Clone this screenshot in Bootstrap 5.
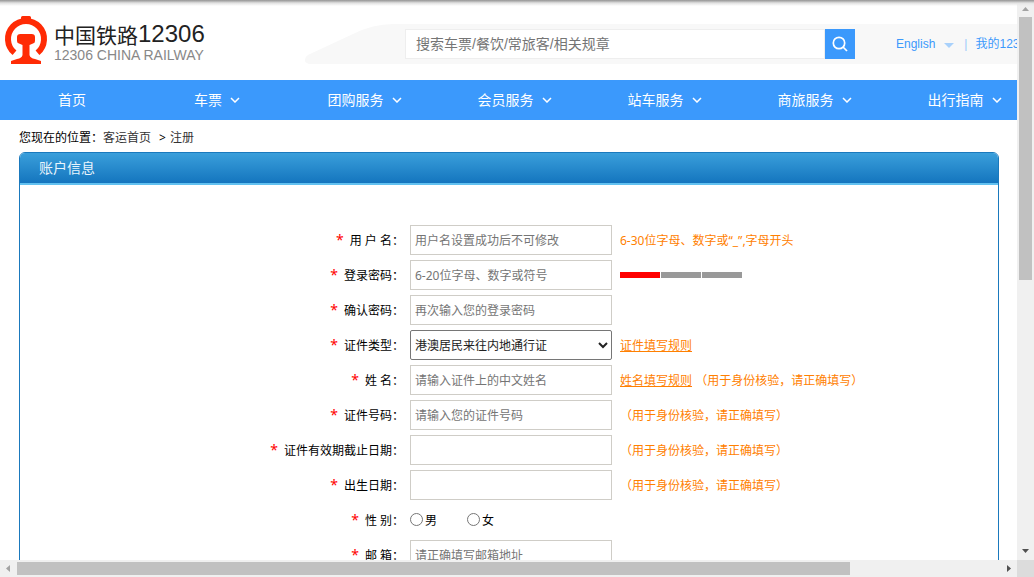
<!DOCTYPE html>
<html lang="zh-CN">
<head>
<meta charset="utf-8">
<meta name="viewport" content="width=device-width, initial-scale=1">
<title>中国铁路12306</title>
<link href="https://cdn.jsdelivr.net/npm/bootstrap@5.3.0/dist/css/bootstrap.min.css" rel="stylesheet">
<style>
body { font: 12px/18px "Noto Sans", "Noto Sans CJK SC", sans-serif; color: #000; background: #fff; }
.window { display: grid; grid-template-columns: minmax(0, 1fr) 17px; grid-template-rows: minmax(0, 1fr) 17px; height: 100vh; }
.top-shade { height: 6px; background: linear-gradient(#999 0, #a8a8a8 17%, #ccc 34%, #e8e8e8 60%, rgba(255,255,255,0)); pointer-events: none; }
/* header */
.site-head { height: 80px; }
.brand { width: 305px; padding-left: 4px; gap: 6px; color: #222; }
.brand-name { font: 24px/26px "Liberation Sans", sans-serif; }
.brand-name span { font: 400 21px/26px "Noto Sans CJK SC", sans-serif; }
.brand-sub { font: 14px/16px "Liberation Sans", sans-serif; color: #888; }
.tail { width: 100px; height: 40px; flex: none; }
.head-bar { height: 40px; background: #f8f8f8; }
.search { width: 450px; height: 30px; }
.search input { border: 1px solid #eee; padding: 0 10px; font: 14px/20px "Liberation Sans", "Noto Sans CJK SC", sans-serif; color: #333; background: #fff; outline: 0; }
.search input::placeholder { color: #757575; }
.search button { width: 30px; border: 0; background: #3b99fc; }
.head-links { font: 12px/18px "Liberation Sans", "Noto Sans CJK SC", sans-serif; padding-left: 41px; color: #3b99fc; }
.head-links a { color: #3b99fc; text-decoration: none; }
.drop { border: 5px solid transparent; border-top-color: #a9d1fb; border-bottom: 0; margin: 2px 10px 0 9px; }
/* navigation */
.main-nav { height: 40px; background: #3b99fc; font-size: 14px; }
.main-nav a { flex: 0 0 150px; color: #fff; text-decoration: none; gap: 8px; padding-right: 1px; }
.main-nav a.short { flex-basis: 145px; }
/* breadcrumb */
.crumbs { height: 32px; padding: 3px 19px 0; color: #000; }
.crumbs a, .crumbs .here { color: #333; text-decoration: none; }
/* account panel */
.panel { margin: 0 18px 0 19px; border: 1px solid #1a79bd; border-radius: 6px 6px 0 0; }
.panel h1 { height: 32px; margin: 0; padding-left: 19px; font-size: 14px; font-weight: 400; line-height: 30px; color: #e8f5fd; border-bottom: 2px solid #62c1f0; border-radius: 5px 5px 0 0; background: linear-gradient(#3a9fdb, #1475be); }
.panel form { padding: 40px 0; }
.line { height: 30px; margin-bottom: 5px; }
.caption { flex: 0 0 384px; text-align: right; margin-right: 6px; white-space: pre; }
.caption i { color: #f00; font-style: normal; font-size: 14px; margin-right: 6px; }
.field { width: 202px; height: 30px; flex: none; font-size: 12px; }
input.field { border: 1px solid #cfcdc7; padding: 0 4px; outline: 0; }
input.field::placeholder { color: #757575; }
select.field { border: 1px solid #767676; border-radius: 2px; background: #fff; color: #222; padding: 0; }
.hint { margin-left: 8px; padding-top: 2px; color: #ff8000; }
.hint a { color: #ff8000; }
.strength { gap: 1px; margin-left: 8px; }
.strength span { width: 40px; height: 6px; background: #999; }
.strength .on { background: #f00; }
.choice { width: 57px; gap: 2px; padding-top: 2px; }
.choice input { width: 13px; height: 13px; margin: 0 0 4px; }
/* scroll bars */
.sbar { background: #f0f0f0; }
.corner { background: #dcdcdc; }
.sbar svg { width: 17px; height: 17px; flex: none; }
.thumb { background: #c1c1c1; }
</style>
</head>
<body>
<div class="top-shade position-absolute top-0 start-0 w-100"></div>
<div class="window">
  <main class="overflow-hidden">
    <header class="site-head d-flex align-items-center">
      <div class="brand d-flex align-items-center flex-shrink-0">
        <svg width="44" height="50" viewBox="0 0 44 50" aria-hidden="true">
          <path d="M10.500 37.800A18 18 0 1 1 33.500 37.800" fill="none" stroke="#ff2b05" stroke-width="6"/>
          <path d="M17 2.500Q17 1 18.500 1H25.500Q27 1 27 2.500V7H17ZM16.500 19H27.500Q31 19 31 22V26Q31 28 29 28.500L25.500 30V40Q26 43 31 44L37 46V49H7V46L13 44Q18 43 18.500 40V30L15 28.500Q13 28 13 26V22Q13 19 16.500 19Z" fill="#ff2b05"/>
        </svg>
        <div class="pt-1">
          <div class="brand-name d-flex"><span>中国铁路</span>12306</div>
          <div class="brand-sub">12306 CHINA RAILWAY</div>
        </div>
      </div>
      <div class="d-flex flex-grow-1 pt-2 text-nowrap">
        <svg class="tail" viewBox="0 0 100 40" aria-hidden="true"><path d="M2 39Q0 39 0 36Q0 32 5 30L48 10Q68 0 88 0H100V40H4Z" fill="#f8f8f8"/></svg>
        <div class="head-bar d-flex align-items-center flex-grow-1">
          <form class="search d-flex flex-shrink-0" role="search">
            <input class="flex-grow-1" type="text" aria-label="搜索" placeholder="搜索车票/餐饮/常旅客/相关规章">
            <button type="button" class="d-flex align-items-center justify-content-center p-0" aria-label="搜索">
              <svg width="16" height="16" viewBox="0 0 16 16" fill="none" stroke="#fff" stroke-width="1.700"><circle cx="7" cy="7" r="5.700"/><path d="M11 11L15 15"/></svg>
            </button>
          </form>
          <div class="head-links d-flex align-items-center">
            <a href="#">English</a><span class="drop"></span><span class="me-2 opacity-50">|</span><a href="#">我的12306</a>
          </div>
        </div>
      </div>
    </header>
    <nav class="main-nav d-flex">
      <a href="#" class="short d-flex align-items-center justify-content-center">首页</a>
      <a href="#" class="short d-flex align-items-center justify-content-center">车票<svg width="10" height="6" viewBox="0 0 10 6" fill="none" stroke="#fff" stroke-width="1.500"><path d="M1 1L5 5L9 1"/></svg></a>
      <a href="#" class="d-flex align-items-center justify-content-center">团购服务<svg width="10" height="6" viewBox="0 0 10 6" fill="none" stroke="#fff" stroke-width="1.500"><path d="M1 1L5 5L9 1"/></svg></a>
      <a href="#" class="d-flex align-items-center justify-content-center">会员服务<svg width="10" height="6" viewBox="0 0 10 6" fill="none" stroke="#fff" stroke-width="1.500"><path d="M1 1L5 5L9 1"/></svg></a>
      <a href="#" class="d-flex align-items-center justify-content-center">站车服务<svg width="10" height="6" viewBox="0 0 10 6" fill="none" stroke="#fff" stroke-width="1.500"><path d="M1 1L5 5L9 1"/></svg></a>
      <a href="#" class="d-flex align-items-center justify-content-center">商旅服务<svg width="10" height="6" viewBox="0 0 10 6" fill="none" stroke="#fff" stroke-width="1.500"><path d="M1 1L5 5L9 1"/></svg></a>
      <a href="#" class="d-flex align-items-center justify-content-center">出行指南<svg width="10" height="6" viewBox="0 0 10 6" fill="none" stroke="#fff" stroke-width="1.500"><path d="M1 1L5 5L9 1"/></svg></a>
    </nav>
    <div class="crumbs d-flex align-items-center">您现在的位置：<a href="#">客运首页</a><span class="mx-1 ps-1">&gt;</span><span class="here">注册</span></div>
    <section class="panel">
      <h1>账户信息</h1>
      <form>
        <div class="line d-flex align-items-center"><label class="caption" for="user"><i>*</i>用 户 名：</label><input class="field" id="user" type="text" placeholder="用户名设置成功后不可修改"><span class="hint">6-30位字母、数字或“_”,字母开头</span></div>
        <div class="line d-flex align-items-center"><label class="caption" for="pw"><i>*</i>登录密码：</label><input class="field" id="pw" type="password" placeholder="6-20位字母、数字或符号"><div class="strength d-flex"><span class="on"></span><span></span><span></span></div></div>
        <div class="line d-flex align-items-center"><label class="caption" for="pw2"><i>*</i>确认密码：</label><input class="field" id="pw2" type="password" placeholder="再次输入您的登录密码"></div>
        <div class="line d-flex align-items-center"><label class="caption" for="idtype"><i>*</i>证件类型：</label><select class="field" id="idtype"><option>港澳居民来往内地通行证</option></select><span class="hint"><a href="#">证件填写规则</a></span></div>
        <div class="line d-flex align-items-center"><label class="caption" for="name"><i>*</i>姓 名：</label><input class="field" id="name" type="text" placeholder="请输入证件上的中文姓名"><span class="hint"><a href="#">姓名填写规则</a> （用于身份核验，请正确填写）</span></div>
        <div class="line d-flex align-items-center"><label class="caption" for="idno"><i>*</i>证件号码：</label><input class="field" id="idno" type="text" placeholder="请输入您的证件号码"><span class="hint">（用于身份核验，请正确填写）</span></div>
        <div class="line d-flex align-items-center"><label class="caption" for="expiry"><i>*</i>证件有效期截止日期：</label><input class="field" id="expiry" type="text"><span class="hint">（用于身份核验，请正确填写）</span></div>
        <div class="line d-flex align-items-center"><label class="caption" for="birth"><i>*</i>出生日期：</label><input class="field" id="birth" type="text"><span class="hint">（用于身份核验，请正确填写）</span></div>
        <div class="line d-flex align-items-center" role="radiogroup" aria-labelledby="sex"><span class="caption" id="sex"><i>*</i>性 别：</span><label class="choice d-flex align-items-center"><input type="radio" name="sex">男</label><label class="choice d-flex align-items-center"><input type="radio" name="sex">女</label></div>
        <div class="line d-flex align-items-center"><label class="caption" for="mail"><i>*</i>邮 箱：</label><input class="field" id="mail" type="email" placeholder="请正确填写邮箱地址"></div>
      </form>
    </section>
  </main>
  <div class="sbar d-flex flex-column" aria-hidden="true">
    <svg viewBox="0 0 17 17"><path d="M5 11L8.500 7L12 11Z" fill="#a3a3a3"/></svg>
    <div class="flex-grow-1"><div class="thumb mx-auto" style="width:13px;height:50%"></div></div>
    <svg viewBox="0 0 17 17"><path d="M5 6L8.500 10L12 6Z" fill="#505050"/></svg>
  </div>
  <div class="sbar d-flex" aria-hidden="true">
    <svg viewBox="0 0 17 17"><path d="M10 5L6 8.500L10 12Z" fill="#a3a3a3"/></svg>
    <div class="flex-grow-1 d-flex align-items-center"><div class="thumb" style="width:84.7%;height:13px"></div></div>
    <svg viewBox="0 0 17 17"><path d="M7 5L11 8.500L7 12Z" fill="#505050"/></svg>
  </div>
  <div class="corner"></div>
</div>
<script src="https://cdn.jsdelivr.net/npm/bootstrap@5.3.0/dist/js/bootstrap.bundle.min.js"></script>
</body>
</html>
